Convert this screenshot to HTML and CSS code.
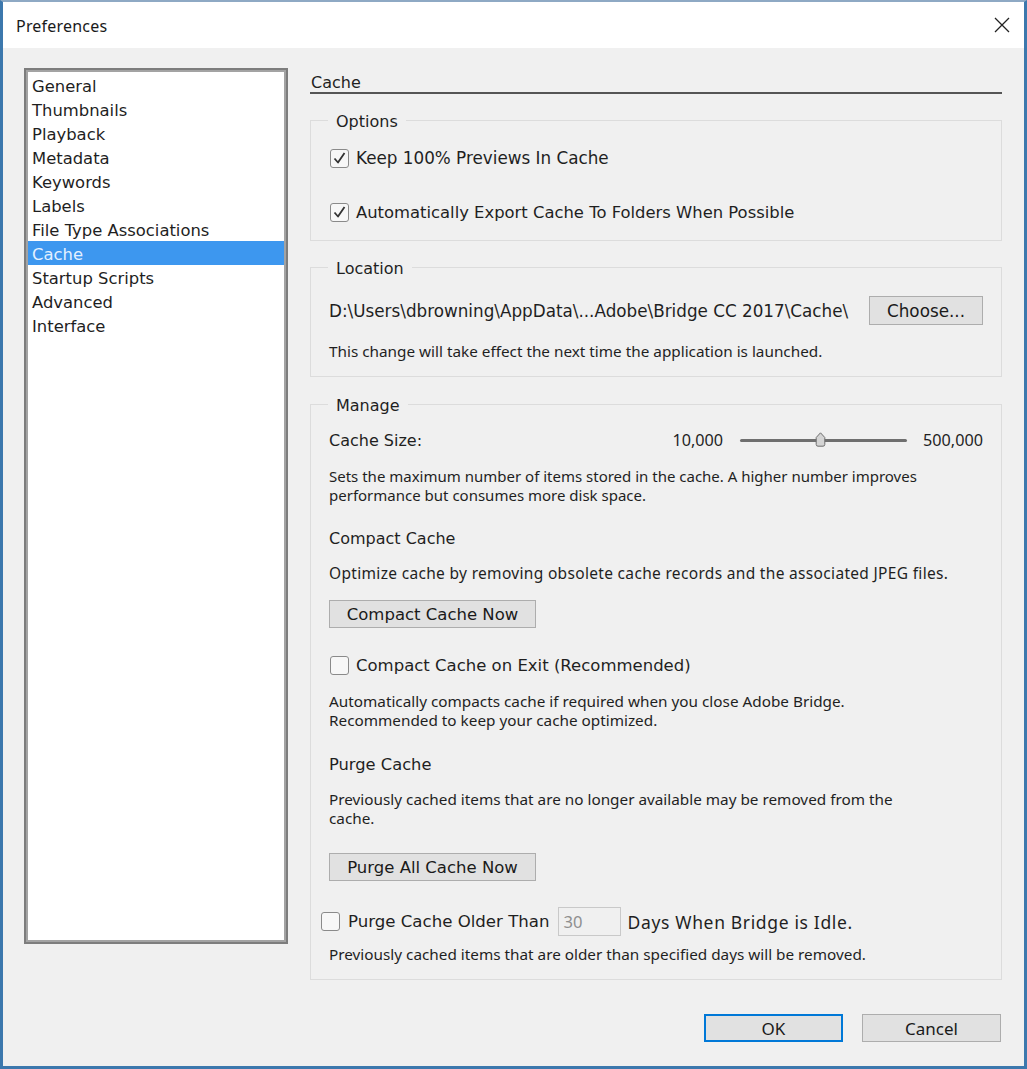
FILE: index.html
```html
<!DOCTYPE html>
<html>
<head>
<meta charset="utf-8">
<title>Preferences</title>
<link rel="stylesheet" href="styles.css">
</head>
<body>
<div class="window">
  <div class="titlebar">
    <span class="title">Preferences</span>
    <svg class="close" width="16" height="16" viewBox="0 0 16 16"><path d="M1 1L15 15M15 1L1 15" stroke="#222" stroke-width="1.3" fill="none"/></svg>
  </div>
  <div class="body">
    <div class="main">
      <ul class="list">
        <li>General</li>
        <li>Thumbnails</li>
        <li>Playback</li>
        <li>Metadata</li>
        <li>Keywords</li>
        <li>Labels</li>
        <li>File Type Associations</li>
        <li class="sel">Cache</li>
        <li>Startup Scripts</li>
        <li>Advanced</li>
        <li>Interface</li>
      </ul>
      <div class="panel">
        <div class="heading">Cache</div>

        <fieldset class="group g-options">
          <legend>Options</legend>
          <label class="check row1">
            <svg class="box" width="19" height="19" viewBox="0 0 19 19"><rect x="0.5" y="0.5" width="18" height="18" rx="2.5" fill="#f7f7f7" stroke="#8a8a8a"/><path d="M4.5 9.5L8 13.5L14.5 4" stroke="#333" stroke-width="1.8" fill="none" stroke-linejoin="round"/></svg>
            <span>Keep 100% Previews In Cache</span>
          </label>
          <label class="check row2">
            <svg class="box" width="19" height="19" viewBox="0 0 19 19"><rect x="0.5" y="0.5" width="18" height="18" rx="2.5" fill="#f7f7f7" stroke="#8a8a8a"/><path d="M4.5 9.5L8 13.5L14.5 4" stroke="#333" stroke-width="1.8" fill="none" stroke-linejoin="round"/></svg>
            <span>Automatically Export Cache To Folders When Possible</span>
          </label>
        </fieldset>

        <fieldset class="group g-location">
          <legend>Location</legend>
          <div class="path-row">
            <span class="path">D:\Users\dbrowning\AppData\...Adobe\Bridge CC 2017\Cache\</span>
            <button class="btn choose">Choose...</button>
          </div>
          <p class="desc note">This change will take effect the next time the application is launched.</p>
        </fieldset>

        <fieldset class="group g-manage">
          <legend>Manage</legend>
          <div class="size-row">
            <span class="lbl">Cache Size:</span>
            <span class="num min">10,000</span>
            <span class="slider"><span class="track"></span>
              <svg class="thumb" width="11" height="15" viewBox="0 0 11 15"><path d="M5.5 0.8L9.8 5.5V12.5Q9.8 14.2 8 14.2H3Q1.2 14.2 1.2 12.5V5.5Z" fill="#d4d4d4" stroke="#6e6e6e" stroke-width="1"/></svg>
            </span>
            <span class="num max">500,000</span>
          </div>
          <p class="desc d1">Sets the maximum number of items stored in the cache. A higher number improves performance but consumes more disk space.</p>

          <div class="sub h1">Compact Cache</div>
          <p class="desc d2">Optimize cache by removing obsolete cache records and the associated JPEG files.</p>
          <button class="btn wide b1">Compact Cache Now</button>
          <label class="check row3">
            <svg class="box" width="19" height="19" viewBox="0 0 19 19"><rect x="0.5" y="0.5" width="18" height="18" rx="2.5" fill="#f7f7f7" stroke="#8a8a8a"/></svg>
            <span>Compact Cache on Exit (Recommended)</span>
          </label>
          <p class="desc d3">Automatically compacts cache if required when you close Adobe Bridge.<br>Recommended to keep your cache optimized.</p>

          <div class="sub h2">Purge Cache</div>
          <p class="desc d4">Previously cached items that are no longer available may be removed from the cache.</p>
          <button class="btn wide b2">Purge All Cache Now</button>
          <div class="purge-row">
            <svg class="box" width="19" height="19" viewBox="0 0 19 19"><rect x="0.5" y="0.5" width="18" height="18" rx="2.5" fill="#f7f7f7" stroke="#8a8a8a"/></svg>
            <span class="pl">Purge Cache Older Than</span>
            <span class="days">30</span>
            <span class="pr">Days When Bridge is Idle.</span>
          </div>
          <p class="desc d5">Previously cached items that are older than specified days will be removed.</p>
        </fieldset>
      </div>
    </div>
    <div class="footer">
      <button class="btn ok">OK</button>
      <button class="btn cancel">Cancel</button>
    </div>
  </div>
</div>
</body>
</html>
```
FILE: styles.css
```css
* { box-sizing: border-box; }
html, body { margin: 0; padding: 0; }
body {
  width: 1027px;
  height: 1069px;
  background: #f0f0f0;
  overflow: hidden;
  font-family: "DejaVu Sans", "Liberation Sans", sans-serif;
  color: #1f1f1f;
}
.window {
  width: 1027px;
  height: 1069px;
  border-left: 3px solid #3c78ad;
  border-right: 3px solid #3c78ad;
  border-bottom: 3px solid #3c78ad;
  border-top: 2px solid #8ea9c4;
  display: flex;
  flex-direction: column;
}
.titlebar {
  height: 46px;
  background: #ffffff;
  display: flex;
  align-items: center;
  padding: 2px 13px 0 13px;
  flex: none;
}
.title {
  font-family: "Noto Sans", "Open Sans", sans-serif;
  font-size: 16px;
  letter-spacing: 0.2px;
  color: #1a1a1a;
  flex: 1;
}
.close { margin-right: 1px; margin-top: -2px; }
.body {
  flex: 1;
  display: flex;
  flex-direction: column;
  padding: 20px 22px 24px 21px;
}
.main {
  display: flex;
  gap: 22px;
}
.list {
  list-style: none;
  margin: 0;
  padding: 3px 0 0 0;
  width: 264px;
  height: 876px;
  background: #fff;
  border: 2px solid #7d7d7d;
  box-shadow: inset 0 0 0 2px #a3a3a3;
  font-size: 16.4px;
  flex: none;
}
.list li {
  height: 24px;
  line-height: 24px;
  padding: 2px 0 0 4px;
  margin: 0 2px;
  white-space: nowrap;
}
.list li.sel {
  background: #3d97ef;
  color: #e3f0ff;
}
.panel {
  width: 692px;
  flex: none;
  padding-top: 3px;
}
.heading {
  font-size: 16px;
  line-height: 19px;
  padding: 2px 0 0 1px;
  border-bottom: 2px solid #555;
}
.group {
  margin: 0;
  border: 1px solid #dcdcdc;
  padding: 0 18px;
  min-width: 0;
}
.group legend {
  font-size: 16px;
  line-height: 20px;
  padding: 3px 8px 0 8px;
  margin-left: -1px;
}
.g-options { margin-top: 15px; padding-bottom: 16px; }
.g-location { margin-top: 15px; padding-bottom: 15px; }
.g-manage { margin-top: 16px; padding-bottom: 15px; }

.check {
  display: flex;
  align-items: center;
  height: 24px;
  font-size: 16.8px;
  gap: 7px;
  padding-left: 1px;
}
.box { flex: none; }
.row1 { margin-top: 14px; }
.row2 { margin-top: 30px; font-size: 16.4px; }

.path-row {
  display: flex;
  align-items: center;
  justify-content: space-between;
  margin-top: 17px;
  font-size: 16.8px;
}
.btn {
  font-family: "DejaVu Sans", "Liberation Sans", sans-serif;
  font-size: 16.5px;
  color: #1a1a1a;
  background: #e1e1e1;
  border: 1px solid #adadad;
  padding: 0;
  margin: 0;
  display: block;
}
.choose { width: 114px; height: 29px; font-size: 16.8px; }
.desc {
  margin: 0;
  font-family: "Noto Sans", "Open Sans", sans-serif;
  font-size: 15.3px;
  line-height: 19px;
  color: #1f1f1f;
}
.note { margin-top: 17px; }

.size-row {
  display: flex;
  align-items: center;
  height: 24px;
  margin-top: 12px;
  font-size: 16px;
}
.size-row .lbl { flex: 1; }
.num {
  font-family: "Noto Sans", "Open Sans", sans-serif;
  font-size: 16.2px;
}
.slider {
  position: relative;
  width: 167px;
  height: 16px;
  margin: 0 16px 0 17px;
  display: flex;
  align-items: center;
}
.track {
  display: block;
  width: 100%;
  height: 3px;
  border-radius: 2px;
  background: #6f6f6f;
}
.thumb {
  position: absolute;
  left: 75px;
  top: 0px;
}
.d1 { margin-top: 15px; width: 610px; font-size: 15px; }
.sub { font-size: 16px; line-height: 24px; }
.h1 { margin-top: 22px; }
.d2 { margin-top: 13px; font-size: 15.5px; letter-spacing: 0.32px; }
.wide { width: 207px; height: 28px; }
.b1 { margin-top: 17px; }
.row3 { margin-top: 25px; font-size: 16.5px; }
.d3 { margin-top: 15px; }
.h2 { margin-top: 23px; font-size: 16.3px; }
.d4 { margin-top: 13px; width: 600px; }
.b2 { margin-top: 25px; }
.purge-row {
  display: flex;
  align-items: center;
  height: 29px;
  margin-top: 26px;
  margin-left: -8px;
  font-size: 16.6px;
}
.purge-row .pl { margin-left: 8px; }
.purge-row .pr {
  font-family: "Noto Sans", "Open Sans", sans-serif;
  font-size: 17.5px;
  letter-spacing: 0.65px;
}
.days {
  width: 63px;
  height: 29px;
  border: 1px solid #c9c9c9;
  margin: 0 7px 0 8px;
  color: #8f8f8f;
  padding-left: 5px;
  line-height: 27px;
  font-family: "Noto Sans", "Open Sans", sans-serif;
}
.d5 { margin-top: 9px; }

.footer {
  display: flex;
  justify-content: flex-end;
  gap: 19px;
  margin-top: auto;
  padding-right: 1px;
}
.ok, .cancel {
  width: 139px;
  height: 28px;
  font-family: "Noto Sans", "Open Sans", sans-serif;
  font-size: 17px;
}
.ok { border: 2px solid #0078d7; }
```
